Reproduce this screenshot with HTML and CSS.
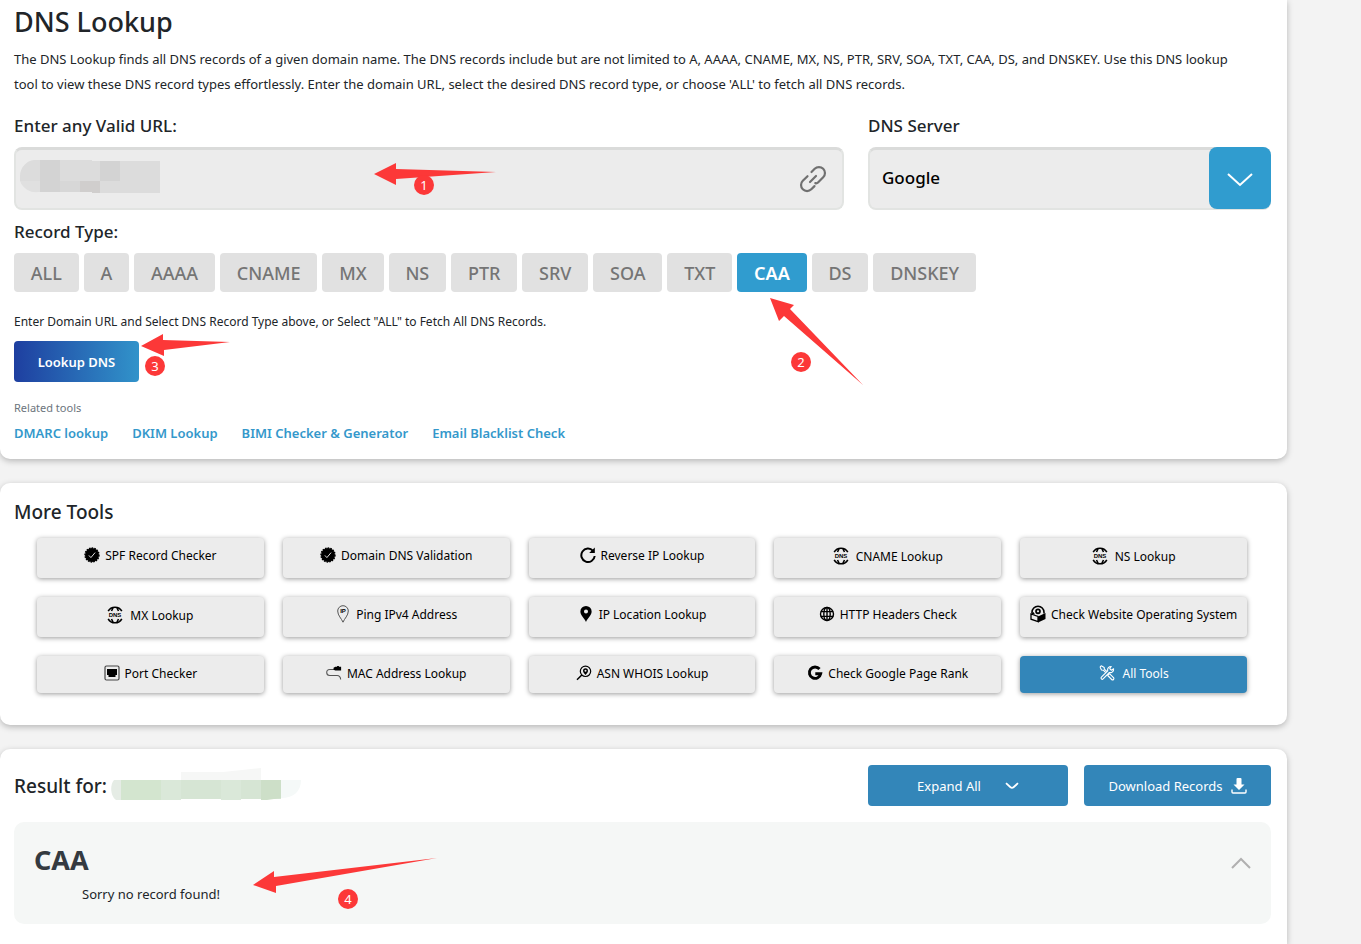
FILE: index.html
```html
<!DOCTYPE html>
<html lang="en">
<head>
  <meta charset="UTF-8" />
  <meta name="viewport" content="width=device-width, initial-scale=1.0"/>
  <title>DNS Lookup</title>
  <link rel="stylesheet" href="styles.css">
</head>
<body>

<!-- shared icons -->
<svg class="sprite" aria-hidden="true">
  <symbol id="i-check" viewBox="0 0 16 16">
    <circle cx="8" cy="8" r="7" fill="#000" stroke="#000" stroke-width="1.4" stroke-dasharray="1.6 1.1"/>
    <path d="M4.9 8.4l2 2.2 4.2-5" fill="none" stroke="#ddd" stroke-width="1"/>
  </symbol>
  <symbol id="i-reload" viewBox="0 0 16 16">
    <path d="M13 3.800A6.700 6.700 0 1 0 14.700 9" fill="none" stroke="#000" stroke-width="2"/>
    <path d="M14.800.4v5.600H9.200z" fill="#000"/>
  </symbol>
  <symbol id="i-dns" viewBox="0 0 16 18">
    <path d="M1.200 5.200C2.700 2.400 5 1.200 8 1.200s5.300 1.200 6.800 4M1.200 12.800c1.500 2.800 3.800 4 6.800 4s5.300-1.200 6.800-4" fill="none" stroke="#000" stroke-width="1.600"/>
    <path d="M4.500 5L6 2M11.500 5L10 2M4.500 13L6 16M11.500 13L10 16" stroke="#000" stroke-width="1.600"/>
    <text x="8" y="11.200" text-anchor="middle" class="dns-text">DNS</text>
  </symbol>
  <symbol id="i-ip" viewBox="0 0 12 18">
    <path d="M6 17.200C4.500 13.500.7 10.500.7 6a5.300 5.300 0 0 1 10.600 0c0 4.500-3.800 7.500-5.300 11.200z" fill="none" stroke="#555" stroke-width="1"/>
    <text x="6" y="8.200" text-anchor="middle" class="ip-text">IP</text>
  </symbol>
  <symbol id="i-pin" viewBox="0 0 12 16">
    <path fill-rule="evenodd" d="M6 15C4.500 12 1 9.200 1 5.800a5 5 0 0 1 10 0C11 9.200 7.500 12 6 15zM6 4a1.800 1.800 0 1 0 0 3.600A1.800 1.800 0 0 0 6 4z"/>
  </symbol>
  <symbol id="i-globe" viewBox="0 0 16 16">
    <g fill="none" stroke="#000" stroke-width="1.400"><circle cx="8" cy="8" r="6.500"/><ellipse cx="8" cy="8" rx="3.200" ry="6.500"/><path d="M8 1.500v13M1.800 5.600h12.400M1.800 10.400h12.400"/></g>
  </symbol>
  <symbol id="i-os" viewBox="0 0 16 18">
    <path d="M2 8.500V7.300a6 6 0 0 1 12 0v1.200" fill="none" stroke="#000" stroke-width="1.600"/>
    <circle cx="8" cy="6.300" r="2" fill="none" stroke="#000" stroke-width="1.700"/>
    <path d="M1 9l7 2.500v5.200L1 14.200z" fill="none" stroke="#000" stroke-width="1.300"/>
    <path d="M8 11.500L15.500 8v6L8 17.400zM1 9l2.500-2 1.500 2.500z"/>
  </symbol>
  <symbol id="i-port" viewBox="0 0 16 16">
    <rect x="1" y="1" width="14" height="14" rx="1.500" fill="none" stroke="#444" stroke-width="1.200"/>
    <path d="M3 4h10v6h-1.500v2h-7v-2H3z"/>
  </symbol>
  <symbol id="i-cable" viewBox="0 0 18 17">
    <path d="M9 4.500H4.200a3.200 3.200 0 0 0 0 6.800h8.300c2.500 0 3.800 1.500 4 4.500" fill="none" stroke="#555" stroke-width="1.200"/>
    <path d="M8.500 2.500l2-1h2V.5h2v1H17v4.200h-6.500l-2-.8z"/>
  </symbol>
  <symbol id="i-whois" viewBox="0 0 16 16">
    <circle cx="9.500" cy="6.300" r="5.200" fill="none" stroke="#000" stroke-width="1.200"/>
    <path d="M5.800 10L1 14.700" stroke="#000" stroke-width="1.500"/>
    <path fill-rule="evenodd" d="M9.500 10C8.500 8.500 7 7.400 7 5.700a2.500 2.500 0 0 1 5 0C12 7.400 10.500 8.500 9.500 10zm0-5.200a1 1 0 1 0 0 2 1 1 0 0 0 0-2z"/>
  </symbol>
  <symbol id="i-google" viewBox="0 0 16 16">
    <path d="M12.500 4A5.700 5.700 0 1 0 13.700 8.700H8.300" fill="none" stroke="#000" stroke-width="2.900"/>
  </symbol>
  <symbol id="i-tools" viewBox="0 0 16 16">
    <g fill="none" stroke="#fff" stroke-width="1.100" stroke-linejoin="round">
      <path d="M2.400 12.200l6.300-6.400c-.6-2.300.8-4.300 3.600-4.300l-1.600 2 1.700 1.800 2.200-1.500c.3 2.700-1.800 4.300-4.200 3.700l-6.300 6.400a1.200 1.200 0 0 1-1.700-1.700z"/>
      <path d="M1 2l1.200-1.200 3 1.600.2 1.800 2.400 2.300M1 2l1.500 3 1.800.2 2.400 2.500M9.500 9.500l1-.8 4 4a1.200 1.200 0 0 1-1.800 1.800l-4-4z"/>
    </g>
  </symbol>
</svg>

<main class="page">
  <section class="card lookup">
    <h1>DNS Lookup</h1>
    <p class="intro">The DNS Lookup finds all DNS records of a given domain name. The DNS records include but are not limited to A, AAAA, CNAME, MX, NS, PTR, SRV, SOA, TXT, CAA, DS, and DNSKEY. Use this DNS lookup tool to view these DNS record types effortlessly. Enter the domain URL, select the desired DNS record type, or choose 'ALL' to fetch all DNS records.</p>

    <div class="fields">
      <div class="field field-url">
        <label for="url">Enter any Valid URL:</label>
        <div class="box">
          <input id="url" type="text">
          <svg class="mosaic" width="140" height="34" aria-hidden="true">
            <path d="M20 0h-2a16 16 0 0 0-18 16v5h20z" fill="#dcdcdc"/>
            <path d="M0 21h20v11h-2a17 17 0 0 1-18-11z" fill="#e0e0e0"/>
            <path d="M20 0h52v1h68v32H80V32H20z" fill="#dcdcdc"/>
            <path d="M20 0h20v32H20zM80 1h20v20H80z" fill="#d3d3d3"/>
            <path d="M40 21h20v11H40z" fill="#d7d7d7"/>
            <path d="M60 21h20v12h-8v-1H60z" fill="#d0cecd"/>
          </svg>
          <svg class="link-icon" viewBox="0 0 28 28" aria-hidden="true">
            <path d="M12.500 7l3.200-3.200a6 6 0 0 1 8.500 8.500L19 17.500c-.8.800-1.800.9-2.700.6M8.500 11.200L3.800 15.800a6 6 0 0 0 8.500 8.500l3.200-3.200M11 17l6-6"/>
          </svg>
        </div>
      </div>
      <div class="field field-server">
        <label for="server">DNS Server</label>
        <div class="box">
          <select id="server"><option>Google</option></select>
          <span class="drop"><svg viewBox="0 0 26 14" aria-hidden="true"><path d="M1 1l12 11L25 1"/></svg></span>
        </div>
      </div>
    </div>

    <h2 class="label">Record Type:</h2>
    <div class="types">
      <button type="button">ALL</button>
      <button type="button">A</button>
      <button type="button">AAAA</button>
      <button type="button">CNAME</button>
      <button type="button">MX</button>
      <button type="button">NS</button>
      <button type="button">PTR</button>
      <button type="button">SRV</button>
      <button type="button">SOA</button>
      <button type="button">TXT</button>
      <button type="button" class="active">CAA</button>
      <button type="button">DS</button>
      <button type="button">DNSKEY</button>
    </div>
    <p class="hint">Enter Domain URL and Select DNS Record Type above, or Select "ALL" to Fetch All DNS Records.</p>
    <button type="button" class="submit">Lookup DNS</button>

    <p class="related-title">Related tools</p>
    <nav class="related">
      <a href="#">DMARC lookup</a>
      <a href="#">DKIM Lookup</a>
      <a href="#">BIMI Checker &amp; Generator</a>
      <a href="#">Email Blacklist Check</a>
    </nav>
  </section>

  <section class="card more">
    <h2>More Tools</h2>
    <div class="tools">
      <a href="#"><svg><use href="#i-check"/></svg>SPF Record Checker</a>
      <a href="#"><svg><use href="#i-check"/></svg>Domain DNS Validation</a>
      <a href="#"><svg><use href="#i-reload"/></svg>Reverse IP Lookup</a>
      <a href="#" class="dns"><svg><use href="#i-dns"/></svg>CNAME Lookup</a>
      <a href="#" class="dns"><svg><use href="#i-dns"/></svg>NS Lookup</a>
      <a href="#" class="dns"><svg><use href="#i-dns"/></svg>MX Lookup</a>
      <a href="#"><svg><use href="#i-ip"/></svg>Ping IPv4 Address</a>
      <a href="#"><svg><use href="#i-pin"/></svg>IP Location Lookup</a>
      <a href="#"><svg><use href="#i-globe"/></svg>HTTP Headers Check</a>
      <a href="#"><svg><use href="#i-os"/></svg>Check Website Operating System</a>
      <a href="#"><svg><use href="#i-port"/></svg>Port Checker</a>
      <a href="#"><svg><use href="#i-cable"/></svg>MAC Address Lookup</a>
      <a href="#"><svg><use href="#i-whois"/></svg>ASN WHOIS Lookup</a>
      <a href="#"><svg><use href="#i-google"/></svg>Check Google Page Rank</a>
      <a href="#" class="all"><svg><use href="#i-tools"/></svg>All Tools</a>
    </div>
  </section>

  <section class="card result">
    <div class="result-head">
      <h2>Result for:</h2>
      <svg class="result-name" width="190" height="32" aria-hidden="true">
        <path d="M70 4h42l38-4v12H70z" fill="#f6f7f6"/>
        <path d="M10 12v20H5C-1 28-1 16 3 12z" fill="#e5ece5"/>
        <path d="M10 12h160v19H10z" fill="#d6e5d4"/>
        <path d="M50 12h20v20H50zM110 12h20v20h-20z" fill="#dae8d9"/>
        <path d="M10 12h40v20H10z" fill="#d3e5cf"/>
        <path d="M150 12h20v18l-14 2h-6z" fill="#cddfc8"/>
        <path d="M170 12h20c0 11-7 18-20 18z" fill="#f5f9f8"/>
      </svg>
      <div class="actions">
        <button type="button" class="expand">Expand All <svg width="14" height="8" viewBox="0 0 14 8" aria-hidden="true"><path d="M1 1.200l4.500 4q1.500 1.200 3 0l4.500-4" fill="none" stroke="#fff" stroke-width="1.800"/></svg></button>
        <button type="button" class="download">Download Records <svg width="16" height="16" viewBox="0 0 16 16" aria-hidden="true"><path d="M5.500 1q0-1 1-1h3q1 0 1 1v5.500h3L8 12 2.500 6.500h3z" fill="#fff"/><path d="M1 11.500V14q0 1 1 1h12q1 0 1-1v-2.500" fill="none" stroke="#fff" stroke-width="1.400"/></svg></button>
      </div>
    </div>
    <div class="record">
      <div>
        <h3>CAA</h3>
        <p>Sorry no record found!</p>
      </div>
      <svg class="fold" width="20" height="12" viewBox="0 0 20 12" aria-hidden="true"><path d="M1 11l9-9 9 9"/></svg>
    </div>
  </section>

  <!-- step markers -->
  <svg class="arrow arrow-1" width="123" height="24" aria-hidden="true"><path d="M0 11L22 0v6l100 3-100 7v6z"/></svg>
  <svg class="arrow arrow-2" width="94" height="88" aria-hidden="true"><path d="M0 0l24 7-4 4 73 76L14 18l-5 5z"/></svg>
  <svg class="arrow arrow-3" width="89" height="23" aria-hidden="true"><path d="M0 12L22 0v6l67 2-66 8v6z"/></svg>
  <svg class="arrow arrow-4" width="185" height="36" aria-hidden="true"><path d="M0 27L21 13v6L184 0 23 28v7z"/></svg>
  <span class="step step-1">1</span>
  <span class="step step-2">2</span>
  <span class="step step-3">3</span>
  <span class="step step-4">4</span>
</main>

</body>
</html>
```
FILE: styles.css
```css
* {
  box-sizing: border-box;
}
body {
  margin: 0;
  background: #f3f3f3;
  color: #212529;
  font-family: "Segoe UI", "Noto Sans", sans-serif;
  font-size: 13px;
}
h1, h2, h3, p {
  margin: 0;
  font-weight: 500;
}
button, input, select {
  font-family: inherit;
}
button {
  border: none;
  padding: 0;
  cursor: pointer;
}
a {
  text-decoration: none;
}
.sprite {
  display: none;
}
.page {
  position: relative;
  display: flex;
  flex-direction: column;
  gap: 24px;
  min-height: 100vh;
  padding-right: 74px;
}
.card {
  background: #fff;
  border-radius: 10px;
  padding: 16px 16px 16px 14px;
  box-shadow: 0 2px 6px rgba(0, 0, 0, 0.25);
}

/* lookup form */
.lookup {
  border-radius: 0 0 10px 10px;
  padding-top: 4px;
}
h1 {
  font-size: 27px;
  line-height: 36px;
}
.intro {
  margin-top: 7px;
  padding-right: 24px;
  line-height: 25px;
  font-weight: 400;
}
.fields {
  display: flex;
  gap: 24px;
  margin-top: 16px;
}
.field-url {
  flex: 830;
}
.field-server {
  flex: 403;
}
.field label, .label {
  display: block;
  font-size: 17px;
  line-height: 26px;
  font-weight: 500;
}
.box {
  position: relative;
  height: 63px;
  margin-top: 8px;
}
.box input, .box select {
  width: 100%;
  height: 100%;
  padding: 0 12px 3px;
  border: 2px solid #e2e4e2;
  border-top: 3px solid #dadbda;
  border-radius: 8px;
  background: #ececec;
  color: #000;
  font-size: 17px;
  font-weight: 500;
  appearance: none;
}
.mosaic {
  position: absolute;
  left: 6px;
  top: 13px;
}
.link-icon {
  position: absolute;
  right: 17px;
  top: 18px;
  width: 28px;
  height: 28px;
  fill: none;
  stroke: #707070;
  stroke-width: 2.2;
  stroke-linecap: round;
}
.drop {
  position: absolute;
  right: 0;
  top: 0;
  display: flex;
  align-items: center;
  justify-content: center;
  width: 62px;
  height: 62px;
  border-radius: 8px;
  background: #309ccf;
  pointer-events: none;
}
.drop svg {
  width: 26px;
  margin-top: 3px;
  fill: none;
  stroke: #fff;
  stroke-width: 2;
}
.label {
  margin-top: 9px;
}
.types {
  display: flex;
  flex-wrap: wrap;
  gap: 5px;
  max-width: 962px;
  margin-top: 8px;
}
.types button {
  flex: auto;
  height: 39px;
  padding: 0 15px;
  border-radius: 4px;
  background: #e1e1e1;
  color: #757575;
  font-size: 18px;
  font-weight: 500;
}
.types .active {
  background: #309ccf;
  color: #fff;
  font-weight: 600;
}
.hint {
  margin-top: 20px;
  font-size: 12px;
  line-height: 20px;
  font-weight: 400;
}
.submit {
  width: 125px;
  height: 41px;
  margin-top: 9px;
  border-radius: 4px;
  background: linear-gradient(90deg, #1e3fa0, #3193ca);
  color: #fff;
  font-size: 13px;
  font-weight: 600;
}
.related-title {
  margin-top: 16px;
  color: #6c757d;
  font-size: 11px;
  line-height: 20px;
  font-weight: 400;
}
.related {
  display: flex;
  gap: 24px;
  margin-top: 5px;
  line-height: 20px;
}
.related a {
  color: #3498cb;
  font-weight: 600;
}

/* more tools */
.more h2, .result h2 {
  font-size: 19px;
  line-height: 26px;
}
.tools {
  display: grid;
  grid-template-columns: repeat(5, 1fr);
  grid-template-rows: 40px 40px 37px;
  gap: 19px;
  padding: 13px 24px 16px 23px;
}
.tools a {
  display: flex;
  justify-content: center;
  gap: 5px;
  padding-top: 8px;
  border-radius: 4px;
  background: #ececec;
  box-shadow: 0 1px 5px rgba(0, 0, 0, 0.4);
  color: #000;
  font-size: 12px;
  line-height: 20px;
  white-space: nowrap;
}
.tools svg {
  width: 16px;
  height: 18px;
}
.tools .dns {
  gap: 7px;
  padding-top: 9px;
}
.tools .all {
  gap: 8px;
  background: #3386b9;
  color: #fff;
}
.dns-text {
  font: bold 6px "Liberation Sans", sans-serif;
}
.ip-text {
  font: bold 6px "Liberation Sans", sans-serif;
}

/* result */
.result {
  flex: 1;
  border-radius: 10px 10px 0 0;
}
.result-head {
  display: flex;
  align-items: center;
  height: 41px;
}
.result-name {
  margin: 0 auto 3px 4px;
}
.actions {
  display: flex;
  gap: 16px;
}
.actions button {
  display: flex;
  align-items: center;
  justify-content: center;
  height: 41px;
  border-radius: 4px;
  background: #3386b9;
  color: #fff;
  font-size: 13px;
}
.expand {
  width: 200px;
  gap: 24px;
}
.download {
  width: 187px;
  gap: 8px;
}
.record {
  display: flex;
  justify-content: space-between;
  margin-top: 16px;
  padding: 20px 20px 20px;
  border-radius: 10px;
  background: #f5f7f6;
}
.record h3 {
  color: #343a40;
  font-size: 27px;
  line-height: 36px;
  font-weight: 700;
}
.record p {
  margin: 6px 0 0 48px;
  line-height: 20px;
  font-weight: 400;
}
.fold {
  margin-top: 15px;
  fill: none;
  stroke: #b0b0b0;
  stroke-width: 2;
}

/* step markers */
.arrow {
  position: absolute;
  fill: #fc3838;
  pointer-events: none;
}
.arrow-1 { left: 374px; top: 163px; }
.arrow-2 { left: 770px; top: 298px; }
.arrow-3 { left: 141px; top: 334px; }
.arrow-4 { left: 253px; top: 858px; }
.step {
  position: absolute;
  width: 20px;
  height: 20px;
  border-radius: 50%;
  background: #fc3838;
  color: #fff;
  text-align: center;
  line-height: 20px;
}
.step-1 { left: 414px; top: 175px; }
.step-2 { left: 791px; top: 352px; }
.step-3 { left: 145px; top: 356px; }
.step-4 { left: 338px; top: 889px; }
```
